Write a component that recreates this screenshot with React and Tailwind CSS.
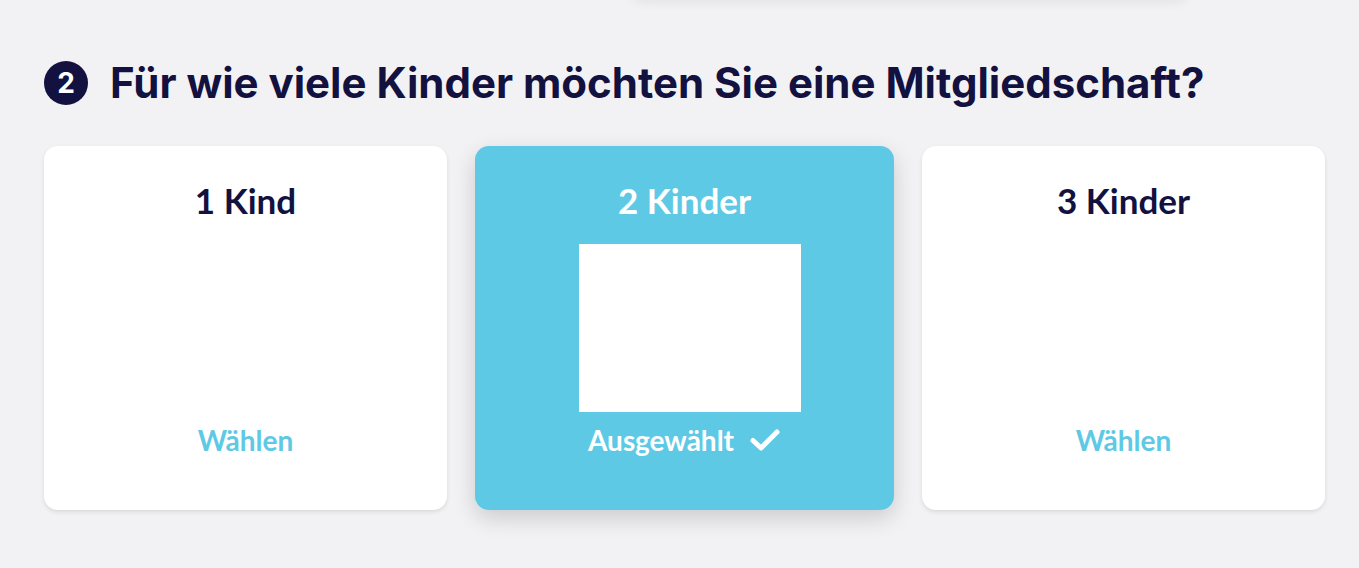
// App.jsx
// Membership step 2: pick how many children.

import React, { useState } from "react";

const options = [
  { id: 1, label: "1 Kind", width: "w-[403px]" },
  { id: 2, label: "2 Kinder", width: "w-[419px]" },
  { id: 3, label: "3 Kinder", width: "w-[403px]" },
];

const CheckIcon = () => (
  <svg className="h-[24px] w-[32px]" viewBox="0 0 32 24" fill="none">
    <path
      d="M4 12.5L12 20L28 4"
      stroke="currentColor"
      strokeWidth="5"
      strokeLinecap="round"
      strokeLinejoin="round"
    />
  </svg>
);

const OptionCard = ({ option, selected, onSelect }) => {
  return (
    <button
      type="button"
      onClick={onSelect}
      className={`${option.width} flex h-[364px] shrink-0 flex-col items-center rounded-[14px] pt-[34px] ${
        selected
          ? "bg-[#5ec9e5] text-white shadow-[0_8px_22px_rgba(0,0,0,0.16)]"
          : "bg-white text-[#12113f] shadow-[0_2px_4px_rgba(0,0,0,0.1)]"
      }`}
      style={{ fontFamily: "Lato, 'Open Sans', sans-serif" }}
    >
      <span className="text-[35px] font-bold leading-[40px]">
        {option.label}
      </span>

      {/* picture slot, only filled for the chosen card */}
      <div
        className={`ml-[11px] mt-[24px] h-[168px] w-[222px] ${
          selected ? "bg-white" : "bg-transparent"
        }`}
      />

      {selected ? (
        <span className="mt-[12px] flex items-center gap-[15px] text-[28px] font-bold leading-[32px]">
          Ausgewählt
          <CheckIcon />
        </span>
      ) : (
        <span className="mt-[12px] text-[28px] font-bold leading-[32px] text-[#5ec9e5]">
          Wählen
        </span>
      )}
    </button>
  );
};

const App = () => {
  const [selected, setSelected] = useState(2);

  return (
    <div className="h-[568px] w-full overflow-hidden bg-[#f2f2f4]">
      {/* bottom edge of the previous block's card */}
      <div className="ml-[630px] -mt-[40px] h-[40px] w-[560px] rounded-[14px] bg-[#f2f2f4] shadow-[0_2px_12px_rgba(0,0,0,0.07)]" />

      <div className="px-[44px] pt-[58px]">
        <div
          className="flex items-center gap-[22px] text-[#12113f]"
          style={{ fontFamily: "Inter, 'Noto Sans', sans-serif" }}
        >
          <span className="flex h-[44px] w-[44px] shrink-0 items-center justify-center rounded-full bg-[#12113f] text-[28px] font-bold text-white">
            2
          </span>
          <h1 className="whitespace-nowrap text-[42px] font-bold leading-[50px]">
            Für wie viele Kinder möchten Sie eine Mitgliedschaft?
          </h1>
        </div>

        <div className="mt-[38px] flex gap-[28px]">
          {options.map((option) => (
            <OptionCard
              key={option.id}
              option={option}
              selected={selected === option.id}
              onSelect={() => setSelected(option.id)}
            />
          ))}
        </div>
      </div>
    </div>
  );
};

export default App;
